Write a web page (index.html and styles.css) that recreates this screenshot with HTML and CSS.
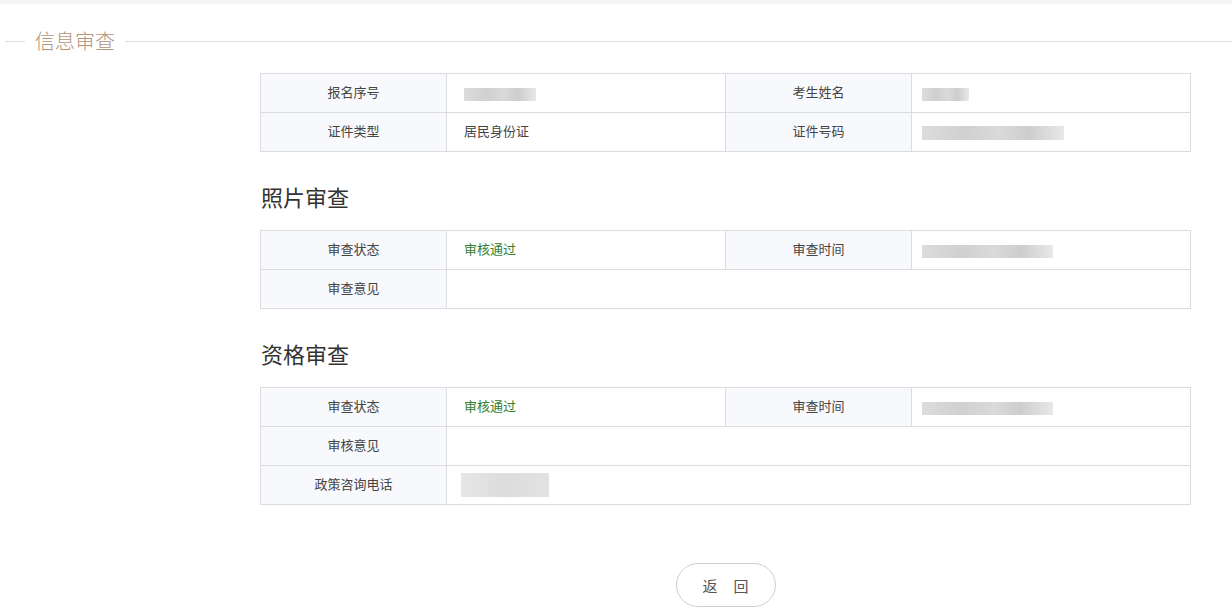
FILE: index.html
```html
<!DOCTYPE html>
<html>
<head>
    <meta charset="utf-8">
    <title>信息审查</title>
    <link rel="stylesheet" href="styles.css">
</head>
<body>
    <div class="topbar"></div>
    <fieldset class="panel">
        <legend>信息审查</legend>
        <div class="content">
            <table class="info">
                <colgroup><col class="c-label"><col class="c-value"><col class="c-label"><col class="c-value"></colgroup>
                <tr>
                    <th>报名序号</th>
                    <td><span class="mask mask-sn"></span></td>
                    <th>考生姓名</th>
                    <td><span class="mask mask-name mask-right"></span></td>
                </tr>
                <tr>
                    <th>证件类型</th>
                    <td>居民身份证</td>
                    <th>证件号码</th>
                    <td><span class="mask mask-id mask-right"></span></td>
                </tr>
            </table>

            <h3>照片审查</h3>
            <table class="info">
                <colgroup><col class="c-label"><col class="c-value"><col class="c-label"><col class="c-value"></colgroup>
                <tr>
                    <th>审查状态</th>
                    <td class="pass">审核通过</td>
                    <th>审查时间</th>
                    <td><span class="mask mask-time mask-right"></span></td>
                </tr>
                <tr>
                    <th>审查意见</th>
                    <td colspan="3"></td>
                </tr>
            </table>

            <h3>资格审查</h3>
            <table class="info">
                <colgroup><col class="c-label"><col class="c-value"><col class="c-label"><col class="c-value"></colgroup>
                <tr>
                    <th>审查状态</th>
                    <td class="pass">审核通过</td>
                    <th>审查时间</th>
                    <td><span class="mask mask-time mask-right"></span></td>
                </tr>
                <tr>
                    <th>审核意见</th>
                    <td colspan="3"></td>
                </tr>
                <tr>
                    <th>政策咨询电话</th>
                    <td colspan="3"><span class="mask mask-phone"></span></td>
                </tr>
            </table>

            <div class="actions">
                <button type="button" class="btn-back">返<span class="gap"></span>回</button>
            </div>
        </div>
    </fieldset>
</body>
</html>
```

FILE: styles.css
```css
body {
    margin: 0;
    background-color: #fff;
    color: #333;
    font-family: "Microsoft YaHei", "Noto Sans CJK SC", sans-serif;
    font-size: 13px;
}

.topbar {
    height: 4px;
    background-color: #f4f4f4;
}

.panel {
    margin: 24px 0 0 5px;
    padding: 0;
    border: 0;
    border-top: 1px solid #dedede;
    min-width: 0;
}

.panel legend {
    margin-left: 20px;
    padding: 0 10px;
    font-size: 20px;
    font-weight: 300;
    line-height: 26px;
    color: #b0927a;
}

.content {
    width: 931px;
    margin: 19px 0 0 255px;
}

table.info {
    width: 931px;
    border-collapse: collapse;
    table-layout: fixed;
}

.c-label {
    width: 186px;
}

table.info th,
table.info td {
    height: 36px;
    padding: 0 0 2px;
    border: 1px solid #dcdcdc;
    font-weight: normal;
    line-height: 18px;
}

table.info th {
    background-color: #f8f9fc;
    color: #444;
    text-align: center;
}

table.info td {
    padding-left: 17px;
    color: #444;
}

table.info td.pass {
    color: #338033;
}

h3 {
    margin: 29px 0 19px 1px;
    font-size: 22px;
    font-weight: normal;
    line-height: 30px;
    color: #333;
}

.mask {
    display: inline-block;
    vertical-align: middle;
    height: 13px;
    margin-top: 2px;
    background: linear-gradient(90deg, #dcdcdc 0%, #d0d0d0 30%, #dadada 55%, #cdcdcd 75%, #e8e8e8 100%);
    filter: blur(0.6px);
}

.mask-right {
    margin-left: -7px;
}

.mask-sn {
    width: 72px;
}

.mask-name {
    width: 47px;
}

.mask-id {
    width: 142px;
    height: 14px;
}

.mask-time {
    width: 131px;
}

.mask-phone {
    width: 88px;
    height: 24px;
    margin-left: -3px;
    background: linear-gradient(90deg, #e6e6e6, #dcdcdc 50%, #e2e2e2);
}

.actions {
    margin-top: 58px;
    text-align: center;
}

.btn-back {
    width: 100px;
    height: 44px;
    border: 1px solid #cfcfcf;
    border-radius: 22px;
    background-color: #fff;
    color: #555;
    font-family: inherit;
    font-size: 15px;
    cursor: pointer;
}

.btn-back .gap {
    display: inline-block;
    width: 16px;
}
```
